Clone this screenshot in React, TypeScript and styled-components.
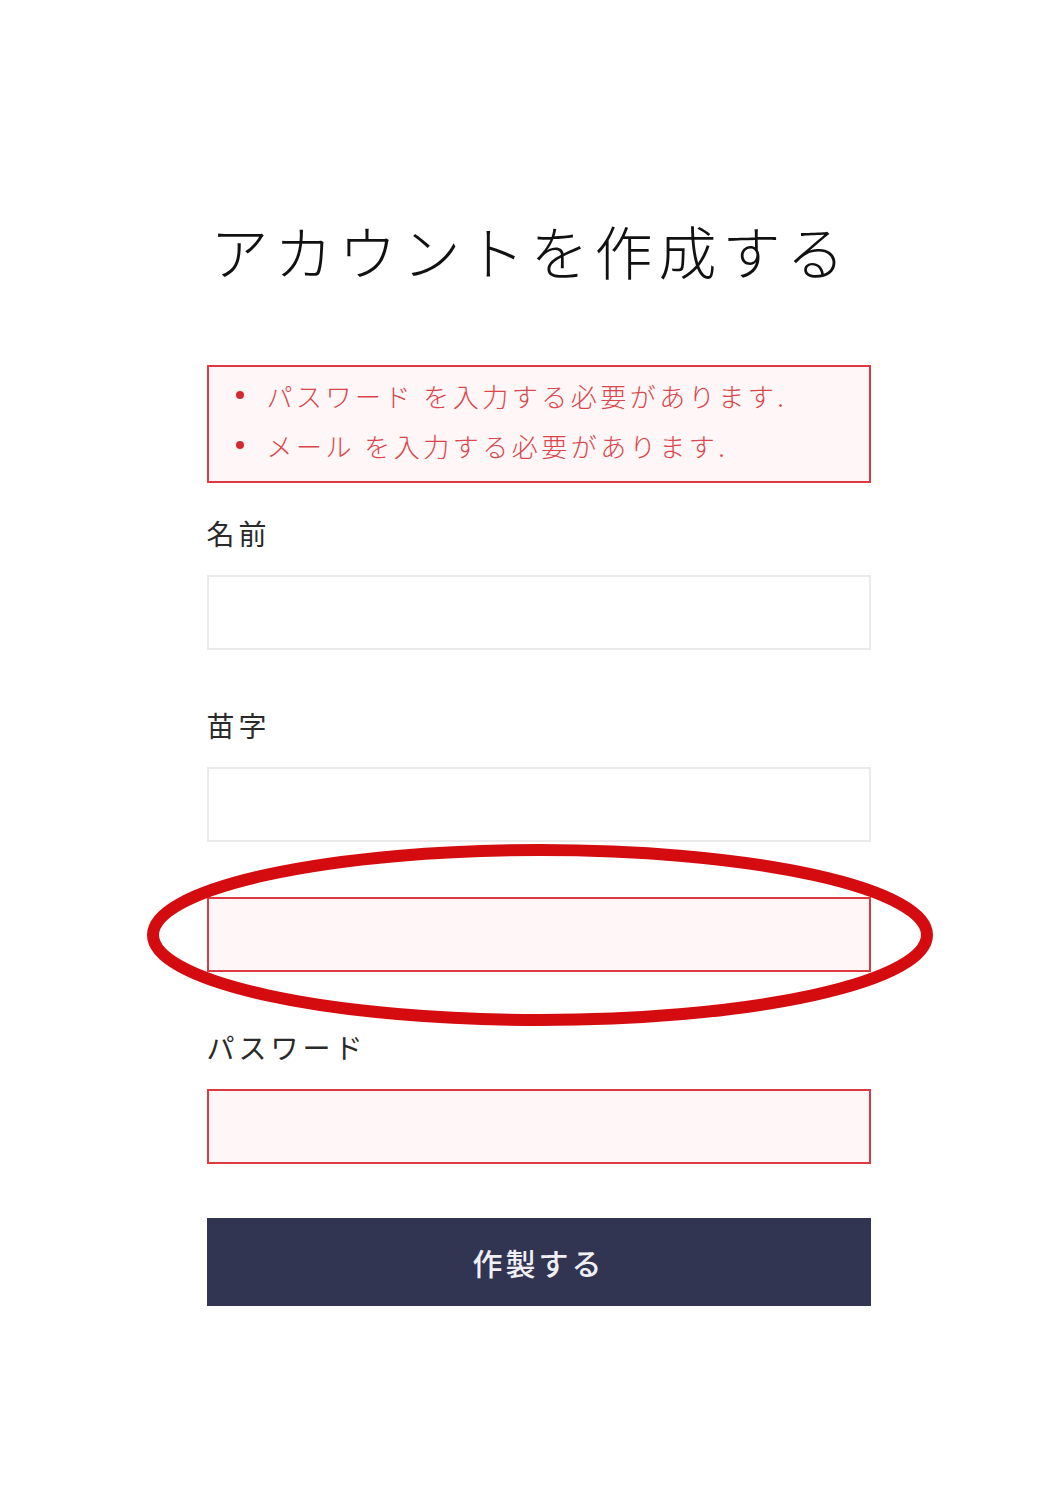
import styled, { createGlobalStyle } from "styled-components";

const GlobalStyle = createGlobalStyle`
  body {
    margin: 0;
    background: #ffffff;
    font-family: "Noto Sans CJK JP", "Noto Sans", sans-serif;
  }
`;

const Page = styled.div`
  display: flex;
  flex-direction: column;
  align-items: center;
  padding: 208px 0 190px;
`;

const Title = styled.h1`
  margin: 0 0 73px 10px;
  font-size: 58px;
  line-height: 84px;
  font-weight: 300;
  letter-spacing: 6px;
  text-align: center;
  color: #111111;
`;

const FormBox = styled.div`
  width: 664px;
  margin-left: 26px;
  display: flex;
  flex-direction: column;
`;

const ErrorBox = styled.ul`
  margin: 0 0 30px;
  padding: 3px 0 11px;
  list-style: none;
  border: 2px solid #dc3a40;
  background: #fff7f7;
`;

const ErrorItem = styled.li`
  display: flex;
  align-items: center;
  height: 50px;
  padding-left: 27px;
  font-size: 26px;
  font-weight: 300;
  letter-spacing: 3.5px;
  color: #d9464c;

  &::before {
    content: "";
    width: 8px;
    height: 8px;
    border-radius: 50%;
    background: #d22a30;
    margin-right: 23px;
    flex-shrink: 0;
  }
`;

const Fields = styled.div`
  display: flex;
  flex-direction: column;
  gap: 55px;
`;

const Field = styled.div`
  position: relative;
  display: flex;
  flex-direction: column;
`;

const Label = styled.label`
  font-size: 28px;
  line-height: 40px;
  font-weight: 400;
  letter-spacing: 4px;
  color: #2a2a2a;
  margin-bottom: 22px;
`;

const Input = styled.input<{ $error?: boolean }>`
  box-sizing: border-box;
  width: 100%;
  height: 75px;
  margin: 0;
  padding: 0 20px;
  font-size: 22px;
  outline: none;
  border: ${(p) => (p.$error ? "2px solid #dc3a40" : "2px solid #ebe9e9")};
  background: ${(p) => (p.$error ? "#fff7f7" : "#ffffff")};
`;

const Marker = styled.svg`
  position: absolute;
  left: -60px;
  top: -54px;
  width: 786px;
  height: 184px;
  pointer-events: none;
`;

const SubmitButton = styled.button`
  margin-top: 54px;
  height: 88px;
  border: none;
  background: #323551;
  color: #f0f0f4;
  font-family: inherit;
  font-size: 30px;
  font-weight: 500;
  letter-spacing: 3px;
  cursor: pointer;
`;

export default function App() {
  return (
    <>
      <GlobalStyle />
      <Page>
        <Title>アカウントを作成する</Title>
        <FormBox>
          <ErrorBox>
            <ErrorItem>パスワード を入力する必要があります.</ErrorItem>
            <ErrorItem>メール を入力する必要があります.</ErrorItem>
          </ErrorBox>
          <Fields>
            <Field>
              <Label>名前</Label>
              <Input type="text" />
            </Field>
            <Field>
              <Label>苗字</Label>
              <Input type="text" />
            </Field>
            <Field>
              <Input type="email" $error />
              <Marker viewBox="0 0 786 184">
                <ellipse
                  cx="393"
                  cy="92"
                  rx="387"
                  ry="85"
                  fill="none"
                  stroke="#d40c0f"
                  strokeWidth="12"
                />
              </Marker>
            </Field>
            <Field>
              <Label>パスワード</Label>
              <Input type="password" $error />
            </Field>
          </Fields>
          <SubmitButton>作製する</SubmitButton>
        </FormBox>
      </Page>
    </>
  );
}
